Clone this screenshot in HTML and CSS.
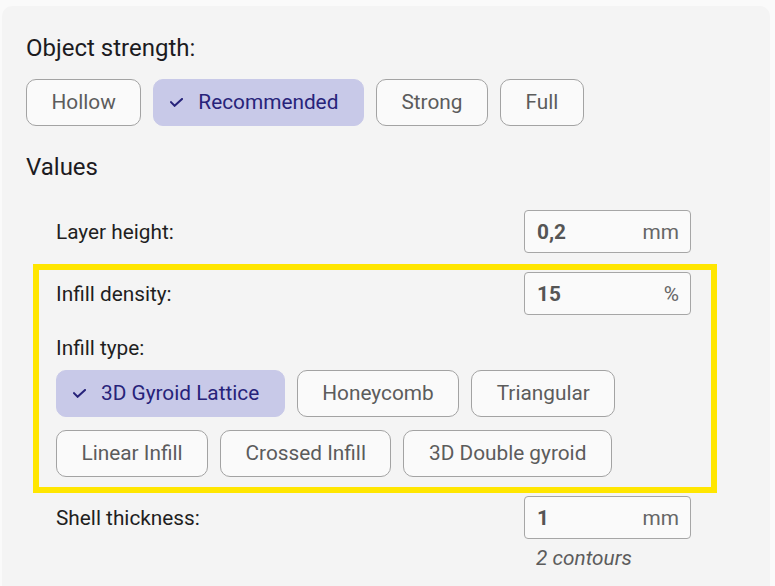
FILE: index.html
```html
<!DOCTYPE html>
<html>
<head>
<meta charset="utf-8">
<link rel="stylesheet" href="styles.css">
</head>
<body>
<div class="card">
  <h2 class="heading">Object strength:</h2>
  <div class="chips">
    <button class="chip">Hollow</button>
    <button class="chip selected"><svg class="check" width="13" height="9" viewBox="0 0 13 9"><polyline points="1,4.2 4.6,7.8 12,1" /></svg>Recommended</button>
    <button class="chip">Strong</button>
    <button class="chip">Full</button>
  </div>
  <h2 class="heading values-heading">Values</h2>
  <div class="values">
    <div class="row">
      <span class="label">Layer height:</span>
      <div class="field"><span class="val">0,2</span><span class="unit">mm</span></div>
    </div>
    <div class="highlight">
      <div class="row">
        <span class="label">Infill density:</span>
        <div class="field"><span class="val">15</span><span class="unit">%</span></div>
      </div>
      <div class="label type-label">Infill type:</div>
      <div class="chips type-chips">
        <button class="chip selected"><svg class="check" width="13" height="9" viewBox="0 0 13 9"><polyline points="1,4.2 4.6,7.8 12,1" /></svg>3D Gyroid Lattice</button>
        <button class="chip">Honeycomb</button>
        <button class="chip">Triangular</button>
        <button class="chip">Linear Infill</button>
        <button class="chip">Crossed Infill</button>
        <button class="chip">3D Double gyroid</button>
      </div>
    </div>
    <div class="row">
      <span class="label">Shell thickness:</span>
      <div class="field"><span class="val">1</span><span class="unit">mm</span></div>
    </div>
    <div class="note-row"><span class="note">2 contours</span></div>
  </div>
</div>
</body>
</html>
```
FILE: styles.css
```css
html, body {
  margin: 0;
  padding: 0;
  background: #fafafa;
  font-family: Roboto, "Liberation Sans", sans-serif;
}

.card {
  margin: 6px 0 0 2px;
  width: 768px;
  height: 580px;
  box-sizing: border-box;
  background: #f4f4f4;
  border-radius: 10px 10px 0 0;
  padding: 28px 0 0 24px;
}

.heading {
  margin: 0;
  font-size: 24px;
  line-height: 28px;
  font-weight: 400;
  color: #1c1b1f;
}

.values-heading {
  margin-top: 27px;
}

.chips {
  display: flex;
  flex-wrap: wrap;
  gap: 13px 12px;
  margin-top: 17px;
}

.chip {
  font-family: inherit;
  font-size: 20.8px;
  line-height: 25px;
  height: 47px;
  box-sizing: border-box;
  padding: 10px 24.5px;
  border: 1px solid #a3a3a3;
  border-radius: 10px;
  background: #fafafa;
  color: #5c5c5c;
  display: flex;
  align-items: center;
  cursor: pointer;
}

.chip.selected {
  background: #c8c9e8;
  border-color: #c8c9e8;
  color: #27237a;
  padding-left: 16px;
}

.check {
  margin-right: 15px;
  flex: none;
}

.check polyline {
  fill: none;
  stroke: #27237a;
  stroke-width: 2;
  stroke-linecap: square;
}

.values {
  margin: 29px 79px 0 30px;
}

.row {
  display: flex;
  justify-content: space-between;
  align-items: center;
}

.label {
  font-size: 20.8px;
  line-height: 24px;
  color: #1f1f1f;
}

.field {
  width: 167px;
  height: 43px;
  box-sizing: border-box;
  border: 1px solid #a6a6a6;
  border-radius: 4px;
  background: #fafafa;
  display: flex;
  justify-content: space-between;
  align-items: center;
  padding: 0 11px 0 12px;
  font-size: 20.8px;
}

.val {
  font-weight: 700;
  color: #555555;
}

.unit {
  color: #666666;
}

.highlight {
  margin: 11px -26px 3px -23px;
  border: 6px solid #ffe600;
  padding: 2px 20px 10px 17px;
}

.type-label {
  display: block;
  margin-top: 21px;
}

.type-chips {
  margin-top: 10px;
}

.note-row {
  display: flex;
  justify-content: flex-end;
  margin-top: 7px;
}

.note {
  width: 167px;
  box-sizing: border-box;
  padding-left: 12px;
  font-style: italic;
  font-size: 20.8px;
  line-height: 24px;
  color: #5c5c5c;
}
```
